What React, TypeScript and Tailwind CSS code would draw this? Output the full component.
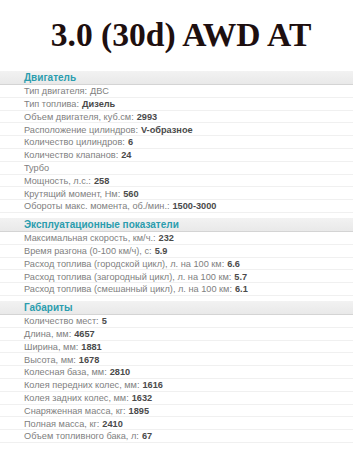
const sections = [
  {
    title: "Двигатель",
    rows: [
      ["Тип двигателя:", "ДВС", false],
      ["Тип топлива:", "Дизель", true],
      ["Объем двигателя, куб.см:", "2993", true],
      ["Расположение цилиндров:", "V-образное", true],
      ["Количество цилиндров:", "6", true],
      ["Количество клапанов:", "24", true],
      ["Турбо", "", true],
      ["Мощность, л.с.:", "258", true],
      ["Крутящий момент, Нм:", "560", true],
      ["Обороты макс. момента, об./мин.:", "1500-3000", true],
    ],
  },
  {
    title: "Эксплуатационные показатели",
    rows: [
      ["Максимальная скорость, км/ч.:", "232", true],
      ["Время разгона (0-100 км/ч), с:", "5.9", true],
      ["Расход топлива (городской цикл), л. на 100 км:", "6.6", true],
      ["Расход топлива (загородный цикл), л. на 100 км:", "5.7", true],
      ["Расход топлива (смешанный цикл), л. на 100 км:", "6.1", true],
    ],
  },
  {
    title: "Габариты",
    rows: [
      ["Количество мест:", "5", true],
      ["Длина, мм:", "4657", true],
      ["Ширина, мм:", "1881", true],
      ["Высота, мм:", "1678", true],
      ["Колесная база, мм:", "2810", true],
      ["Колея передних колес, мм:", "1616", true],
      ["Колея задних колес, мм:", "1632", true],
      ["Снаряженная масса, кг:", "1895", true],
      ["Полная масса, кг:", "2410", true],
      ["Объем топливного бака, л:", "67", true],
    ],
  },
] as const;

export default function App() {
  return (
    <div className="h-[450px] w-[353px] overflow-hidden bg-white">
      <h1 className="flex h-[71px] items-center justify-center pl-[9px] font-['Liberation_Serif',serif] text-[33.6px] font-bold text-[#1e0f0f]">
        3.0 (30d) AWD AT
      </h1>
      <div className="font-['Liberation_Sans',Arial,sans-serif]">
        {sections.map((s, i) => (
          <div key={s.title} className={i > 0 ? "mt-[5px]" : ""}>
            <div className="flex h-[14px] items-center border-b border-[#d4d4d4] bg-gradient-to-b from-[#f2f2f2] to-[#e9e9e9] pl-6 text-[10px] font-bold text-[#2b9dae]">
              {s.title}
            </div>
            {s.rows.map(([label, value, bold]) => (
              <div
                key={label}
                className="flex h-[12.8px] items-center border-b border-[#f0f0f0] pl-6 pt-[2px] text-[9.2px] leading-none text-[#808080]"
              >
                {label}
                {value && (
                  <span className={bold ? "ml-[3px] font-bold text-[#4a4a4a]" : "ml-[3px] text-[#808080]"}>
                    {value}
                  </span>
                )}
              </div>
            ))}
          </div>
        ))}
      </div>
    </div>
  );
}
